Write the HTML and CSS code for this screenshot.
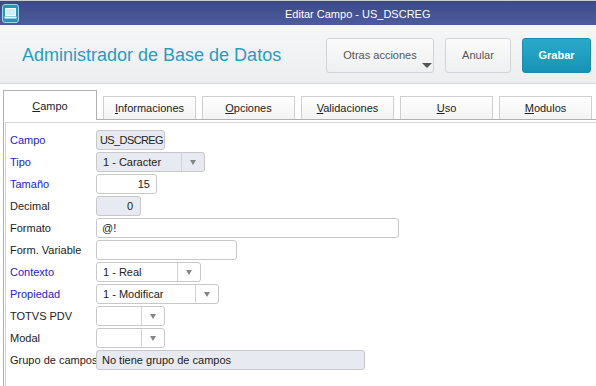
FILE: index.html
```html
<!DOCTYPE html>
<html lang="es">
<head>
    <meta charset="UTF-8">
    <title>Editar Campo - US_DSCREG</title>
    <link rel="stylesheet" href="styles.css">
</head>
<body>
    <div id="main">
        <div class="titlebar">
            <span class="app-icon">
                <svg width="17" height="19" viewBox="0 0 17 19">
                    <rect x="0.5" y="0.5" width="16" height="18" rx="2.5" fill="#2b93b4" stroke="#9fd6e6"/>
                    <rect x="3.5" y="4.5" width="10" height="7" fill="#cfeef7" stroke="#ffffff"/>
                    <rect x="2.5" y="12.5" width="12" height="2" fill="#ffffff"/>
                </svg>
            </span>
            <span class="title">Editar Campo - US_DSCREG</span>
        </div>

        <div class="header">
            <h1>Administrador de Base de Datos</h1>
            <div class="actions">
                <button class="btn btn-more">Otras acciones<span class="caret"></span></button>
                <button class="btn btn-cancel">Anular</button>
                <button class="btn btn-primary">Grabar</button>
            </div>
        </div>

        <div class="tabs">
            <div class="tab active"><u>C</u>ampo</div>
            <div class="tab"><u>I</u>nformaciones</div>
            <div class="tab"><u>O</u>pciones</div>
            <div class="tab"><u>V</u>alidaciones</div>
            <div class="tab"><u>U</u>so</div>
            <div class="tab"><u>M</u>odulos</div>
        </div>

        <div class="panel">
            <div class="panel-inner">
                <div class="row">
                    <span class="lbl req">Campo</span>
                    <div class="field ro w-campo">US_DSCREG</div>
                </div>
                <div class="row">
                    <span class="lbl req">Tipo</span>
                    <div class="field ro select w-tipo"><span class="val">1 - Caracter</span><span class="arrow"></span></div>
                </div>
                <div class="row">
                    <span class="lbl req">Tamaño</span>
                    <div class="field num w-tam">15</div>
                </div>
                <div class="row">
                    <span class="lbl">Decimal</span>
                    <div class="field ro num w-dec">0</div>
                </div>
                <div class="row">
                    <span class="lbl">Formato</span>
                    <div class="field w-formato">@!</div>
                </div>
                <div class="row">
                    <span class="lbl">Form. Variable</span>
                    <div class="field w-formvar"></div>
                </div>
                <div class="row">
                    <span class="lbl req">Contexto</span>
                    <div class="field select w-contexto"><span class="val">1 - Real</span><span class="arrow"></span></div>
                </div>
                <div class="row">
                    <span class="lbl req">Propiedad</span>
                    <div class="field select w-prop"><span class="val">1 - Modificar</span><span class="arrow"></span></div>
                </div>
                <div class="row">
                    <span class="lbl">TOTVS PDV</span>
                    <div class="field select w-small"><span class="val"></span><span class="arrow"></span></div>
                </div>
                <div class="row">
                    <span class="lbl">Modal</span>
                    <div class="field select w-small"><span class="val"></span><span class="arrow"></span></div>
                </div>
                <div class="row">
                    <span class="lbl">Grupo de campos</span>
                    <div class="field ro w-grupo">No tiene grupo de campos</div>
                </div>
            </div>
        </div>
    </div>
</body>
</html>
```

FILE: styles.css
```css
body
{
    margin: 0;
    font-family: "Liberation Sans", Arial, sans-serif;
    background-color: #fff;
    overflow: hidden;
}
#main
{
    width: 596px;
    height: 386px;
    overflow: hidden;
}

/* window title */
.titlebar
{
    height: 25px;
    box-sizing: border-box;
    display: flex;
    align-items: center;
    border-top: 1px solid #c9cdd9;
    background: linear-gradient(#3c4987, #4d5c9d);
    color: #fff;
    font-size: 11px;
}
.app-icon
{
    display: flex;
    margin-left: 2px;
    margin-top: 1px;
}
.title
{
    margin-left: 266px;
    padding-top: 2px;
}

/* header with actions */
.header
{
    height: 58px;
    display: flex;
    align-items: center;
    padding: 0 5px 0 22px;
    border-bottom: 1px solid #d8d9db;
    background: linear-gradient(#f5f6f7, #eceef0);
}
.header h1
{
    margin: 0;
    margin-top: 2px;
    font-size: 18px;
    font-weight: normal;
    color: #2a9cbf;
}
.actions
{
    margin-left: auto;
    display: flex;
    gap: 11px;
    margin-top: 2px;
}
.btn
{
    position: relative;
    height: 35px;
    padding: 0;
    border: 1px solid #d2d4d7;
    border-radius: 3px;
    background: linear-gradient(#fbfbfb, #eeeff0);
    font-family: "Liberation Sans", Arial, sans-serif;
    font-size: 11px;
    color: #555;
}
.btn-more
{
    width: 108px;
}
.btn-cancel
{
    width: 66px;
}
.btn-primary
{
    width: 69px;
    border-color: #1b8cab;
    background: linear-gradient(#2aaacb, #1793b5);
    color: #fff;
    font-weight: bold;
}
.caret
{
    position: absolute;
    right: 1px;
    bottom: 4px;
    border-left: 5px solid transparent;
    border-right: 5px solid transparent;
    border-top: 5px solid #555;
}

/* tabs */
.tabs
{
    position: relative;
    z-index: 1;
    height: 30px;
    display: flex;
    align-items: flex-end;
    gap: 6px;
    margin-top: 6px;
    margin-bottom: -1px;
    padding-left: 3px;
}
.tab
{
    width: 93px;
    height: 23px;
    box-sizing: border-box;
    margin-bottom: 1px;
    padding-top: 5px;
    border: 1px solid #cfcfcf;
    border-bottom: none;
    background: linear-gradient(#ffffff, #f3f3f3);
    font-size: 11px;
    color: #222;
    text-align: center;
}
.tab.active
{
    width: 94px;
    height: 30px;
    margin-bottom: 0;
    padding-top: 9px;
    border-color: #b0b0b0;
    background: #fff;
}

/* form panel */
.panel
{
    margin-left: 3px;
    border-top: 1px solid #b0b0b0;
    border-left: 1px solid #b0b0b0;
}
.panel-inner
{
    height: 300px;
    margin: 2px 0 0 1px;
    padding: 7px 0 0 4px;
    border-top: 1px solid #d6d6d6;
    border-left: 1px solid #d6d6d6;
}
.row
{
    display: flex;
    align-items: center;
    height: 20px;
    margin-bottom: 2px;
}
.lbl
{
    flex: none;
    width: 86px;
    white-space: nowrap;
    font-size: 11px;
    color: #222;
}
.lbl.req
{
    color: #2424c4;
}
.field
{
    flex: none;
    height: 20px;
    box-sizing: border-box;
    display: flex;
    align-items: center;
    padding: 0 5px;
    border: 1px solid #c8c8c8;
    border-radius: 3px;
    background-color: #fff;
    font-size: 11px;
    color: #222;
    white-space: nowrap;
    overflow: hidden;
}
.field.ro
{
    background-color: #e7eaf0;
}
.field.num
{
    justify-content: flex-end;
    padding-right: 6px;
}
.field.ro.num
{
    padding-right: 7px;
}
.select
{
    padding: 0;
}
.select .val
{
    flex: 1;
    padding-left: 6px;
}
.select .arrow
{
    width: 22px;
    height: 100%;
    display: flex;
    align-items: center;
    justify-content: center;
    border-left: 1px solid #d2d2d2;
}
.select .arrow::after
{
    content: "";
    border-left: 3.5px solid transparent;
    border-right: 3.5px solid transparent;
    border-top: 5px solid #858585;
}

.w-campo { width: 69px; padding: 0 3px; letter-spacing: -0.6px; }
.w-tipo { width: 109px; }
.w-tam { width: 61px; }
.w-dec { width: 45px; }
.w-formato { width: 303px; }
.w-formvar { width: 141px; }
.w-contexto { width: 105px; }
.w-prop { width: 123px; }
.w-small { width: 69px; }
.w-grupo { width: 269px; }
```
